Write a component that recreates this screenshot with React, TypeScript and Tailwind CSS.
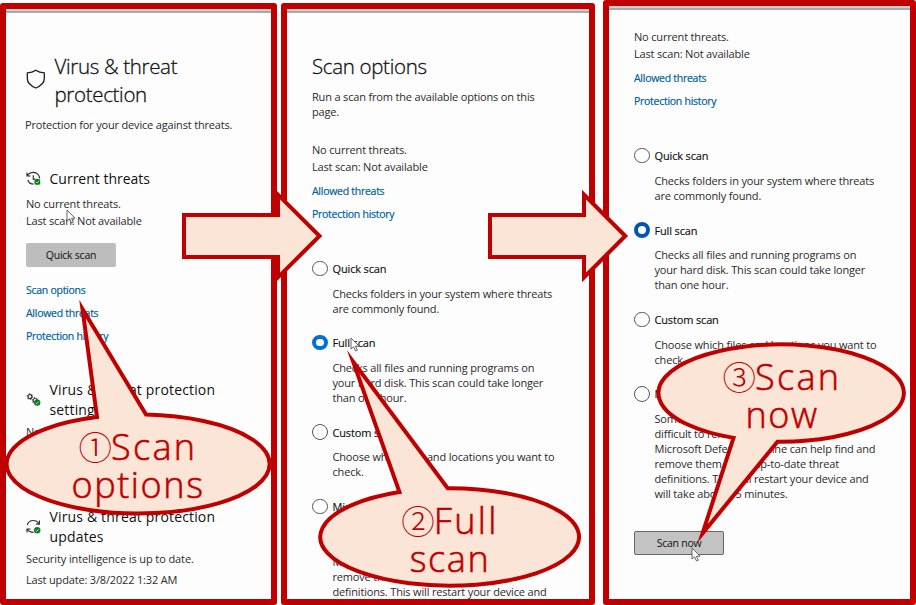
import type { ReactNode } from "react";

const BODY = "text-[11px] leading-[15px] whitespace-nowrap text-[#2b2b2b] tracking-[-0.17px]";
const LINK =
  "pt-px text-[10.5px] leading-[15px] whitespace-nowrap text-[#00609f] tracking-[-0.27px] [-webkit-text-stroke:0.2px_#00609f]";
const TITLE =
  "text-[20.5px] leading-[28px] font-light whitespace-nowrap text-[#111] tracking-[-0.33px] [-webkit-text-stroke:0.3px_#111]";
const HEADING = "flex items-center gap-[7.5px] text-[14px] leading-5 whitespace-nowrap text-[#111]";

function Panel({ className, children }: { className: string; children: ReactNode }) {
  return (
    <section className={`overflow-hidden rounded-[3px] border-[6px] border-[#c00000] bg-[#fdfdfd] ${className}`}>
      <div className="h-1 border-b-2 border-[#a9a9a9] bg-[#cfcfcf]" />
      {children}
    </section>
  );
}

function Check({ x, y }: { x: number; y: number }) {
  return (
    <g>
      <circle cx={x} cy={y} r="3.2" fill="#0b7d1c" stroke="none" />
      <path d={`M${x - 1.5} ${y}l1.1 1.1 2-2.1`} stroke="#d9f3dc" strokeWidth="0.8" fill="none" />
    </g>
  );
}

function ShieldIcon() {
  return (
    <svg className="mb-0.5 h-5 w-5 shrink-0" viewBox="0 0 20 20" fill="none" stroke="#1c1c1c" strokeWidth="1.3" strokeLinejoin="round">
      <path d="M9.800 1.200C7.400 2.900 4.600 3.700 1.300 3.900v5.700c0 4.200 3.300 7.300 8.500 9.400 5.200-2.100 8.500-5.200 8.500-9.400V3.900C15 3.700 12.200 2.900 9.800 1.200z" />
    </svg>
  );
}

function HistoryIcon() {
  return (
    <svg className="h-4 w-4 shrink-0" viewBox="0 0 16 16" fill="none" stroke="#333" strokeWidth="1.2">
      <path d="M1 1.500v3.500h3.500M1.400 4.700C2.700 2.300 4.800 1.300 7.300 1.300c3.500 0 6.300 2.700 6.300 6.200M1.900 9c.8 2.600 3 4.200 5.600 4.200" />
      <path d="M7.300 4.200v4h2" />
      <rect x="8.500" y="8" width="5.700" height="5.700" rx="1.500" fill="#0b7d1c" stroke="none" />
      <path d="M9.900 10.900l1.100 1.100 2-2.100" stroke="#d9f3dc" strokeWidth="0.8" />
    </svg>
  );
}

function GearsIcon() {
  return (
    <svg className="h-4 w-4 shrink-0" viewBox="0 0 16 16" fill="none" stroke="#333">
      <circle cx="3.900" cy="4.600" r="2" strokeWidth="1.200" />
      <circle cx="3.900" cy="4.600" r="2.900" strokeWidth="1" strokeDasharray="1.200 1.840" />
      <circle cx="9" cy="8.500" r="2" strokeWidth="1.200" />
      <circle cx="9" cy="8.500" r="2.900" strokeWidth="1" strokeDasharray="1.200 1.840" />
      <Check x={11.2} y={10.600} />
    </svg>
  );
}

function SyncIcon() {
  return (
    <svg className="h-4 w-4 shrink-0" viewBox="0 0 16 16" fill="none" stroke="#333" strokeWidth="1.200">
      <path d="M1.200 6C2.100 3.200 4.400 1.500 7.200 1.500c2.500 0 4.600 1.200 5.800 3.200M13.400 1.500v3.600H9.900" />
      <path d="M1 13.500V10h3.500M1.500 10.300c1.200 2.200 3.400 3.200 6.200 3.100" />
      <Check x={11.2} y={11.300} />
    </svg>
  );
}

function Threats() {
  return (
    <>
      <p className={BODY}>No current threats.</p>
      <p className={`mt-0.5 ${BODY}`}>Last scan: Not available</p>
    </>
  );
}

const OPTIONS = [
  { name: "Quick scan", lines: ["Checks folders in your system where threats", "are commonly found."] },
  {
    name: "Full scan",
    lines: ["Checks all files and running programs on", "your hard disk. This scan could take longer", "than one hour."],
  },
  { name: "Custom scan", lines: ["Choose which files and locations you want to", "check."] },
  {
    name: "Microsoft Defender Offline scan",
    lines: [
      "Some malicious software can be particularly",
      "difficult to remove from your device.",
      "Microsoft Defender Offline can help find and",
      "remove them using up-to-date threat",
      "definitions. This will restart your device and",
      "will take about 15 minutes.",
    ],
  },
];

function ScanChoices({ accent, maxLines }: { accent: string; maxLines: number }) {
  return (
    <>
      <Threats />
      <p className={`mt-[9px] ${LINK}`}>Allowed threats</p>
      <p className={`mt-[7px] ${LINK}`}>Protection history</p>
      <div className="mt-[38.5px] flex flex-col gap-[19.3px]">
        {OPTIONS.map((o) => (
          <div key={o.name}>
            <div className="flex h-[15.5px] items-start gap-[5px]">
              <span
                className={`h-[15.5px] w-[15.5px] shrink-0 rounded-full bg-white ${
                  o.name === "Full scan" ? `border-[4.5px] ${accent}` : "border border-[#555]"
                }`}
              />
              <span className="mt-[0.3px] text-[11px] leading-[15px] tracking-[-0.15px] whitespace-nowrap text-[#111] [-webkit-text-stroke:0.15px_#111]">
                {o.name}
              </span>
            </div>
            <div className="mt-[9.6px] pl-[20.5px]">
              {o.lines.slice(0, maxLines).map((l) => (
                <p key={l} className={BODY}>
                  {l}
                </p>
              ))}
            </div>
          </div>
        ))}
      </div>
    </>
  );
}

function Cursor({ className }: { className: string }) {
  return (
    <svg className={`absolute h-4 w-3 ${className}`} viewBox="0 0 12 16" fill="#fff" stroke="#555" strokeWidth="0.9">
      <path d="M1 1v11l2.600-2.200 1.900 4.200 1.800-.8-1.800-4H9z" />
    </svg>
  );
}

function CalloutText({ className, mark, first, second }: { className: string; mark: string; first: string; second: string }) {
  return (
    <div
      className={`absolute flex w-[160px] flex-col items-center font-['Open_Sans'] text-[36px] leading-[37.5px] font-light whitespace-nowrap text-[#c00000] ${className}`}
    >
      <div className="flex">
        <span className="-mt-px mb-px w-[32.5px] font-['Noto_Sans_CJK_JP'] text-[33.5px]">{mark}</span>
        <span className="tracking-[2.3px] [-webkit-text-stroke:0.6px_#c00000]">{first}</span>
      </div>
      <span className="tracking-[1.6px] [-webkit-text-stroke:0.6px_#c00000]">{second}</span>
    </div>
  );
}

export default function App() {
  return (
    <main className="relative h-[605px] w-[916px] overflow-hidden bg-white font-['Open_Sans',sans-serif]">
      <div className="flex h-full items-stretch">
        <Panel className="mt-[3px] w-[277px]">
          <div className="pl-5">
            <div className="mt-[39px] flex items-center">
              <ShieldIcon />
              <h1 className={`ml-[8.5px] ${TITLE}`}>
                Virus &amp; threat
                <br />
                protection
              </h1>
            </div>
            <p className={`mt-[9px] -ml-px ${BODY}`}>Protection for your device against threats.</p>
            <div className={`mt-[37px] ${HEADING}`}>
              <HistoryIcon />
              <h2>Current threats</h2>
            </div>
            <div className="mt-[7px]">
              <Threats />
            </div>
            <div className="mt-[15px] flex h-6 w-[90px] items-center justify-center rounded-[2px] bg-[#bdbdbd] pt-0.5 text-[10.5px] tracking-[-0.25px] text-[#111]">
              Quick scan
            </div>
            <p className={`mt-[15px] ${LINK}`}>Scan options</p>
            <p className={`mt-[7px] ${LINK}`}>Allowed threats</p>
            <p className={`mt-[7px] ${LINK}`}>Protection history</p>
            <div className={`mt-9 tracking-[0.16px] ${HEADING}`}>
              <GearsIcon />
              <h2>
                Virus &amp; threat protection
                <br />
                settings
              </h2>
            </div>
            <p className={`mt-1 ${BODY}`}>No action needed.</p>
            <div className={`mt-[68px] tracking-[0.16px] ${HEADING}`}>
              <SyncIcon />
              <h2>
                Virus &amp; threat protection
                <br />
                updates
              </h2>
            </div>
            <p className="mt-1 text-[11px] leading-[15px] tracking-[-0.1px] whitespace-nowrap text-[#2b2b2b]">
              Security intelligence is up to date.
            </p>
            <p className={`mt-1.5 ${BODY}`}>Last update: 3/8/2022 1:32 AM</p>
          </div>
        </Panel>

        <Panel className="mt-[3px] ml-1 w-[314px]">
          <div className="pl-[25px]">
            <h1 className={`mt-[39px] ${TITLE}`}>Scan options</h1>
            <p className={`mt-[9px] mb-[23px] ${BODY}`}>
              Run a scan from the available options on this
              <br />
              page.
            </p>
            <ScanChoices accent="border-[#0070d8]" maxLines={5} />
          </div>
        </Panel>

        <Panel className="ml-2 w-[313px]">
          <div className="pt-[19.4px] pl-[25px]">
            <ScanChoices accent="border-[#0057b0]" maxLines={6} />
            <div className="mt-[29.6px] flex h-6 w-[90px] items-center justify-center rounded-[2px] border border-[#666] bg-[#c3c3c3] pt-0.5 text-[10.5px] tracking-[-0.25px] text-[#111]">
              Scan now
            </div>
          </div>
        </Panel>
      </div>

      <Cursor className="top-[209px] left-[66px]" />
      <Cursor className="top-[337px] left-[350px]" />

      <svg
        className="absolute inset-0 h-[605px] w-[916px]"
        viewBox="0 0 916 605"
        fill="#fbe5d6"
        stroke="#c00000"
        strokeWidth="4"
        strokeMiterlimit="12"
      >
        <path d="M184 215H278V194.700L319.500 236 278 277.300V257H184z" />
        <path d="M490 215H584V194.700L625.300 236 584 277.300V257H490z" />
        <path d="M146 414.600A131.500 49.500 0 1 1 97 417L82.500 309z" />
        <path d="M447.700 488.300A129.400 48.700 0 1 1 399.500 492.100L353.200 361.800z" />
        <path d="M777.500 441.700A122.700 48.700 0 1 0 733.500 437.900L702.500 533.500z" />
      </svg>
      <Cursor className="top-[547px] left-[691px]" />

      <CalloutText className="top-[428px] left-[58px]" mark="①" first="Scan" second="options" />
      <CalloutText className="top-[502px] left-[370px]" mark="②" first="Full" second="scan" />
      <CalloutText className="top-[358px] left-[702px]" mark="③" first="Scan" second="now" />
    </main>
  );
}
